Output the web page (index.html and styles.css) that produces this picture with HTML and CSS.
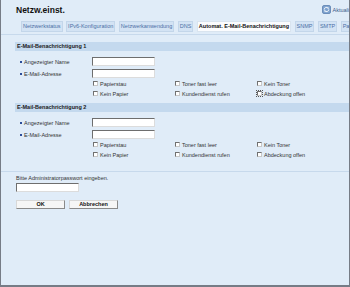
FILE: index.html
```html
<!DOCTYPE html>
<html lang="de">
<head>
<meta charset="utf-8">
<title>Netzw.einst.</title>
<link rel="stylesheet" href="styles.css">
</head>
<body>
<div class="frame">
  <div class="page">
    <div class="top">
      <h1 class="title">Netzw.einst.</h1>
      <div class="refresh">
        <svg class="refresh-icon" viewBox="0 0 9 9" width="9" height="9">
          <rect x="0.5" y="0.5" width="8" height="8" rx="1.5" fill="#7fa3cf" stroke="#5b7fae" stroke-width="0.8"/>
          <path d="M2.2 4.6 A2.3 2.3 0 0 1 6.3 3.2" fill="none" stroke="#fff" stroke-width="0.9"/>
          <path d="M6.8 2.2 L6.6 3.8 L5.1 3.4 Z" fill="#fff"/>
          <path d="M6.8 4.4 A2.3 2.3 0 0 1 2.7 5.8" fill="none" stroke="#fff" stroke-width="0.9"/>
          <path d="M2.2 6.8 L2.4 5.2 L3.9 5.6 Z" fill="#fff"/>
        </svg>
        <span>Aktualisieren</span>
      </div>
    </div>
    <div class="tabs">
      <div class="tab">Netzwerkstatus</div>
      <div class="tab">IPv6-Konfiguration</div>
      <div class="tab">Netzwerkanwendung</div>
      <div class="tab">DNS</div>
      <div class="tab active">Automat. E-Mail-Benachrichtigung</div>
      <div class="tab">SNMP</div>
      <div class="tab">SMTP</div>
      <div class="tab">Parallelschnittstelle</div>
    </div>
    <div class="rule"></div>

    <div class="section">
      <div class="sec-head">E-Mail-Benachrichtigung 1</div>
      <div class="field"><span class="bullet"></span><span class="label">Angezeigter Name</span><span class="input"></span></div>
      <div class="field"><span class="bullet"></span><span class="label">E-Mail-Adresse</span><span class="input"></span></div>
      <div class="checks">
        <div class="check"><span class="box"></span>Papierstau</div>
        <div class="check"><span class="box"></span>Toner fast leer</div>
        <div class="check"><span class="box"></span>Kein Toner</div>
        <div class="check"><span class="box"></span>Kein Papier</div>
        <div class="check"><span class="box"></span>Kundendienst rufen</div>
        <div class="check"><span class="box focus"></span>Abdeckung offen</div>
      </div>
    </div>

    <div class="section">
      <div class="sec-head">E-Mail-Benachrichtigung 2</div>
      <div class="field"><span class="bullet"></span><span class="label">Angezeigter Name</span><span class="input"></span></div>
      <div class="field"><span class="bullet"></span><span class="label">E-Mail-Adresse</span><span class="input"></span></div>
      <div class="checks">
        <div class="check"><span class="box"></span>Papierstau</div>
        <div class="check"><span class="box"></span>Toner fast leer</div>
        <div class="check"><span class="box"></span>Kein Toner</div>
        <div class="check"><span class="box"></span>Kein Papier</div>
        <div class="check"><span class="box"></span>Kundendienst rufen</div>
        <div class="check"><span class="box"></span>Abdeckung offen</div>
      </div>
    </div>

    <div class="rule rule-bottom"></div>
    <div class="pw-label">Bitte Administratorpasswort eingeben.</div>
    <span class="input pw-input"></span>
    <div class="buttons">
      <div class="btn">OK</div>
      <div class="btn">Abbrechen</div>
    </div>
  </div>
</div>
</body>
</html>
```

FILE: styles.css
```css
html, body {
  margin: 0;
  padding: 0;
}
body {
  font-family: "Liberation Sans", Arial, sans-serif;
  font-size: 5.5px;
  color: #333;
  background: #e0ecf8;
}
.frame {
  width: 350px;
  height: 287px;
  box-sizing: border-box;
  border-left: 1px solid #767c86;
  border-right: 1px solid #767c86;
  border-bottom: 2px solid #767c86;
  background: #e0ecf8;
  overflow: hidden;
}
.page {
  padding-left: 15px;
  width: 420px;
}
.top {
  width: 333px;
  height: 21px;
  display: flex;
  justify-content: space-between;
  align-items: flex-start;
}
.title {
  margin: 5px 0 0 0;
  font-size: 8.5px;
  font-weight: bold;
  color: #111;
  line-height: 10px;
}
.refresh {
  width: 27px;
  margin-top: 5px;
  display: flex;
  align-items: center;
  gap: 1.5px;
  white-space: nowrap;
  color: #3a5a8a;
  font-size: 5.5px;
}
.refresh-icon {
  flex: none;
}
.tabs {
  display: flex;
  gap: 3.5px;
  padding-left: 5px;
  height: 11px;
  white-space: nowrap;
}
.tab {
  box-sizing: border-box;
  height: 11px;
  line-height: 9px;
  padding: 0 1px;
  border: 1px solid #c3d6ea;
  background: #d3e3f4;
  color: #4a6fa5;
}
.tab.active {
  background: #fbfcfe;
  border-color: #d9e4ef;
  color: #111;
  font-weight: bold;
}
.rule {
  margin-top: 2px;
  margin-left: -15px;
  height: 1px;
  background: #c7d9ec;
}
.section {
  margin-top: 7px;
}
.section + .section {
  margin-top: 6px;
}
.sec-head {
  margin-left: -1px;
  height: 9px;
  line-height: 9px;
  padding-left: 2px;
  background: #c4d9ee;
  color: #1a1a1a;
  font-weight: bold;
}
.field {
  display: flex;
  align-items: center;
  height: 9px;
  margin-top: 3px;
  padding-left: 4px;
}
.sec-head + .field {
  margin-top: 6px;
}
.bullet {
  width: 2px;
  height: 2px;
  background: #2b4d9a;
  margin-right: 2px;
}
.label {
  width: 68px;
}
.input {
  display: block;
  box-sizing: border-box;
  width: 63px;
  height: 9px;
  background: #fff;
  border-top: 1px solid #6e6e6e;
  border-left: 1px solid #6e6e6e;
  border-right: 1px solid #dcdcdc;
  border-bottom: 1px solid #dcdcdc;
}
.checks {
  display: grid;
  grid-template-columns: 82px 82px 82px;
  grid-auto-rows: 7px;
  row-gap: 3px;
  margin-top: 2px;
  padding-left: 77px;
}
.check {
  display: flex;
  align-items: center;
  gap: 2px;
  white-space: nowrap;
}
.box {
  box-sizing: border-box;
  width: 5px;
  height: 5px;
  background: #fff;
  border-top: 1px solid #707070;
  border-left: 1px solid #707070;
  border-right: 1px solid #c8c8c8;
  border-bottom: 1px solid #c8c8c8;
}
.box.focus {
  outline: 1px dotted #555;
  outline-offset: 0.5px;
}
.rule-bottom {
  margin-top: 13px;
}
.pw-label {
  margin-top: 3px;
  height: 7px;
  line-height: 7px;
}
.pw-input {
  margin-top: 1px;
}
.buttons {
  display: flex;
  gap: 4px;
  margin-top: 8px;
}
.btn {
  box-sizing: border-box;
  width: 49px;
  height: 9px;
  line-height: 7px;
  text-align: center;
  font-weight: bold;
  color: #111;
  background: #f6f6f6;
  border-top: 1px solid #d8d8d8;
  border-left: 1px solid #d8d8d8;
  border-right: 1px solid #8a8a8a;
  border-bottom: 1px solid #8a8a8a;
}
```
